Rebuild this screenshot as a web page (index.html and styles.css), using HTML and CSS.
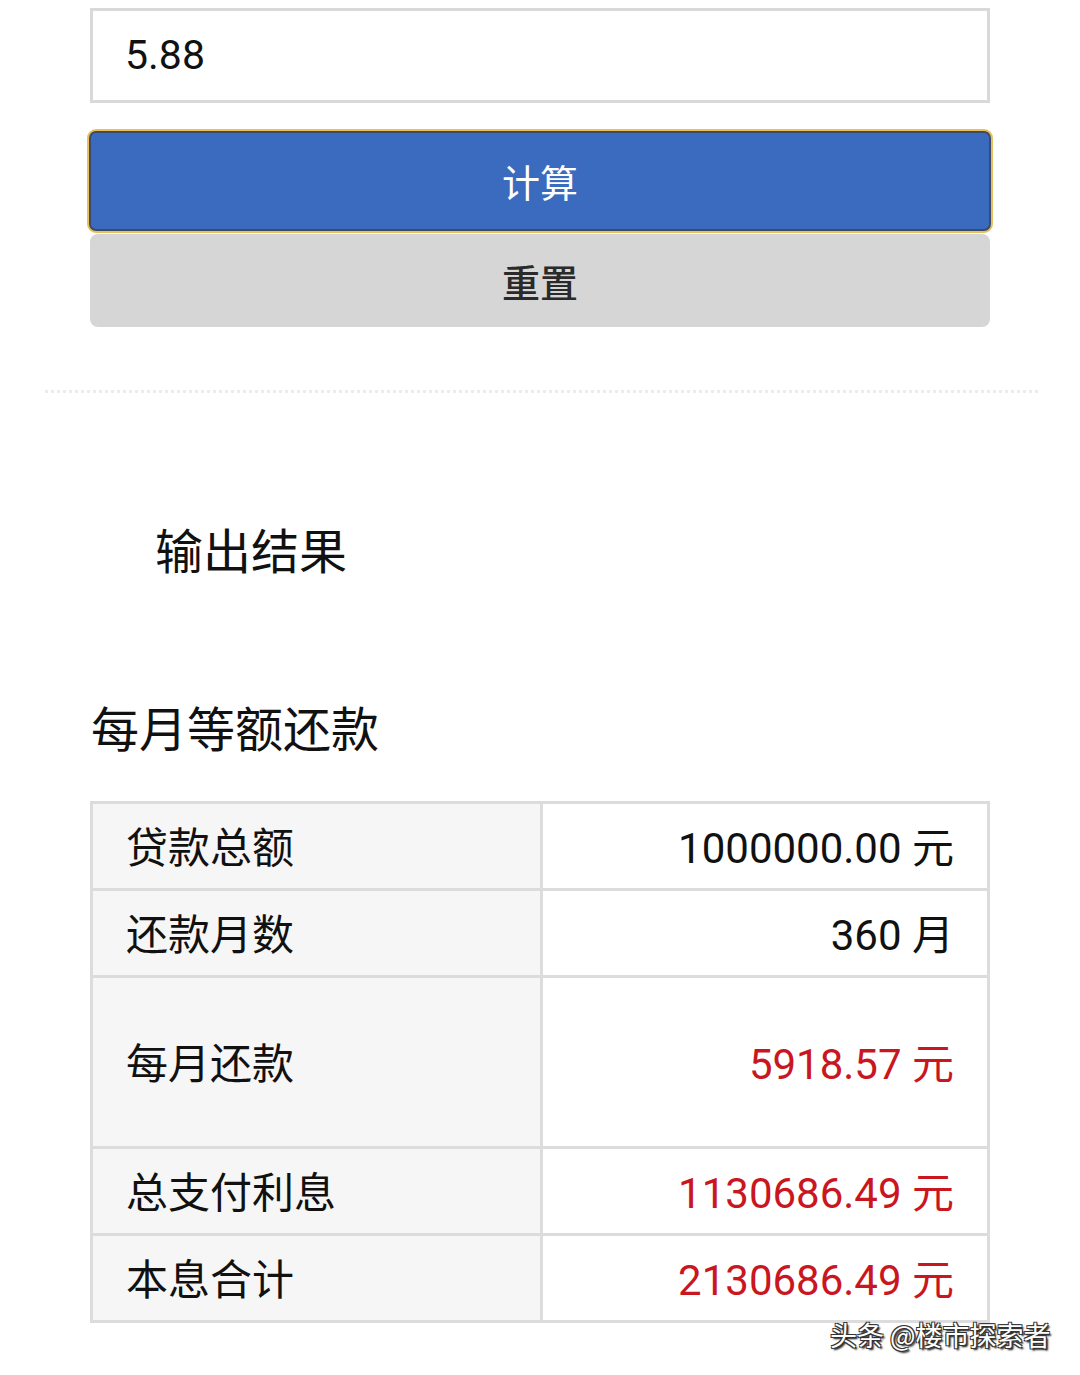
FILE: index.html
```html
<!DOCTYPE html>
<html lang="zh-CN">
<head>
<meta charset="utf-8">
<title>贷款计算器</title>
<link rel="stylesheet" href="styles.css">
</head>
<body>
<div class="page">
  <div class="form">
    <div class="input">5.88</div>
    <div class="btn btn-primary">计算</div>
    <div class="btn btn-reset">重置</div>
  </div>
  <div class="divider"></div>
  <h2 class="output-title">输出结果</h2>
  <h3 class="section-title">每月等额还款</h3>
  <table class="result">
    <tr class="r1"><th>贷款总额</th><td>1000000.00 元</td></tr>
    <tr class="r2"><th>还款月数</th><td>360 月</td></tr>
    <tr class="r3"><th>每月还款</th><td class="red">5918.57 元</td></tr>
    <tr class="r4"><th>总支付利息</th><td class="red">1130686.49 元</td></tr>
    <tr class="r5"><th>本息合计</th><td class="red">2130686.49 元</td></tr>
  </table>
  <div class="watermark">头条 @楼市探索者</div>
</div>
</body>
</html>
```
FILE: styles.css
```css
html, body {
  margin: 0;
  padding: 0;
  background: #fff;
}
body {
  font-family: Roboto, "Noto Sans CJK SC", sans-serif;
  color: #111;
  width: 1080px;
  height: 1375px;
  overflow: hidden;
}
.page {
  display: flex;
  flex-direction: column;
}
.form {
  margin: 8px 0 0 90px;
  width: 900px;
  display: flex;
  flex-direction: column;
}
.input {
  box-sizing: border-box;
  height: 95px;
  border: 3px solid #d9d9d9;
  padding-left: 32px;
  font-size: 41px;
  line-height: 89px;
  color: #111;
}
.btn {
  box-sizing: border-box;
  text-align: center;
  font-size: 38px;
  font-family: "Noto Sans CJK SC", sans-serif;
}
.btn-primary {
  margin-top: 28px;
  margin-left: -1px;
  margin-right: -1px;
  height: 100px;
  background: #3b6bbf;
  color: #fff;
  border: 2px solid #3d4a6a;
  border-radius: 7px;
  box-shadow: 0 0 0 2px #e8c15a;
  line-height: 96px;
}
.btn-reset {
  margin-top: 3px;
  height: 93px;
  background: #d6d6d6;
  color: #2a2a2a;
  border-radius: 8px;
  line-height: 93px;
  font-weight: 500;
}
.divider {
  margin: 63px 42px 0 45px;
  border-top: 3px dotted #ececec;
}
.output-title {
  margin: 130px 0 0 155px;
  font-size: 48px;
  font-weight: 400;
  line-height: 50px;
  font-family: "Noto Sans CJK SC", sans-serif;
}
.section-title {
  margin: 128px 0 0 91px;
  font-size: 48px;
  font-weight: 400;
  line-height: 50px;
  font-family: "Noto Sans CJK SC", sans-serif;
}
.result {
  margin: 50px 0 0 90px;
  width: 900px;
  border-collapse: collapse;
  border: 3px solid #dcdcdc;
  font-size: 42px;
}
.result th, .result td {
  border: 3px solid #dcdcdc;
  padding: 0 33px;
  box-sizing: border-box;
}
.result th {
  width: 450px;
  background: #f6f6f6;
  text-align: left;
  font-weight: 400;
  font-family: "Noto Sans CJK SC", sans-serif;
  padding-bottom: 4px;
}
.result td {
  background: #fff;
  text-align: right;
  padding-bottom: 4px;
}
.result .r1, .result .r2, .result .r4, .result .r5 { height: 87px; }
.result .r3 { height: 171px; }
.result td.red { color: #c9161f; }
.watermark {
  margin: -5px 0 0 830px;
  font-size: 27px;
  line-height: 34px;
  color: #fff;
  font-family: "Noto Sans CJK SC", sans-serif;
  text-shadow: 1px 1px 0 #333, -1px -1px 0 #333, 1px -1px 0 #333, -1px 1px 0 #333, 2px 2px 2px #000;
}
```
